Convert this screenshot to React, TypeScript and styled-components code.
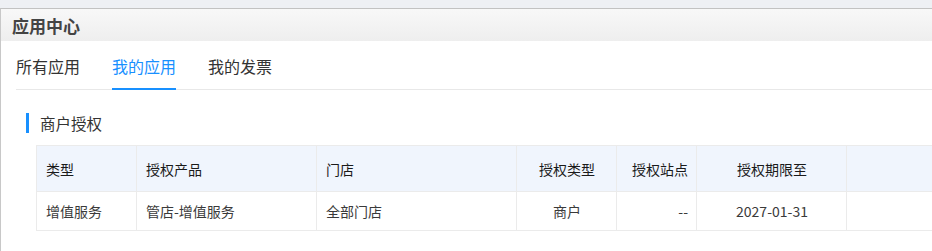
import styled, { createGlobalStyle } from "styled-components";

const GlobalStyle = createGlobalStyle`
  html, body {
    margin: 0;
    padding: 0;
    background: #eef0f4;
    font-family: "Noto Sans CJK SC", "Noto Sans", sans-serif;
  }
`;

const Page = styled.div`
  padding-top: 8px;
  height: 243px;
  overflow: hidden;
`;

const Panel = styled.div`
  height: 100%;
  overflow: hidden;
  background: #fff;
  border-top: 1px solid #c2c2c2;
  border-left: 1px solid #c8c8c8;
`;

const PanelHeader = styled.div`
  height: 32px;
  display: flex;
  align-items: center;
  padding-left: 11px;
  background: linear-gradient(#f8f8f8, #eeeeee);
  font-size: 17px;
  font-weight: 700;
  color: #444;
`;

const Tabs = styled.div`
  display: flex;
  gap: 32px;
  margin-left: 15px;
  height: 48px;
  border-bottom: 1px solid #e8e8e8;
`;

const Tab = styled.div<{ $active?: boolean }>`
  display: flex;
  align-items: center;
  padding-top: 2px;
  font-size: 16px;
  color: ${(p) => (p.$active ? "#1890ff" : "#333")};
  border-bottom: 2px solid ${(p) => (p.$active ? "#1890ff" : "transparent")};
  margin-bottom: -1px;
  box-sizing: border-box;
`;

const Section = styled.div`
  padding: 23px 0 0 25px;
`;

const SectionTitle = styled.div`
  display: flex;
  align-items: center;
  height: 20px;
  border-left: 3px solid #1890ff;
  padding-left: 11px;
  font-size: 15.5px;
  color: #333;
`;

const Table = styled.table`
  margin: 12px 0 0 10px;
  border-collapse: collapse;
  width: 1000px;
  table-layout: fixed;
  font-size: 14px;
`;

const Th = styled.th<{ $align?: string; $w?: number }>`
  width: ${(p) => (p.$w ? `${p.$w}px` : "auto")};
  height: 46px;
  padding: 0 8px 0 9px;
  background: #f0f5fd;
  border: 1px solid #ebebeb;
  text-align: ${(p) => p.$align || "left"};
  font-weight: 400;
  color: #1a1a1a;
  box-sizing: border-box;
`;

const Td = styled.td<{ $align?: string }>`
  height: 39px;
  padding: 0 8px 0 9px;
  border: 1px solid #ebebeb;
  text-align: ${(p) => p.$align || "left"};
  color: #3a3a3a;
  box-sizing: border-box;
`;

const columns = [
  { title: "类型", w: 100, align: "left" },
  { title: "授权产品", w: 180, align: "left" },
  { title: "门店", w: 200, align: "left" },
  { title: "授权类型", w: 100, align: "center" },
  { title: "授权站点", w: 80, align: "right" },
  { title: "授权期限至", w: 150, align: "center" },
  { title: "", w: 0, align: "left" },
];

const rows = [["增值服务", "管店-增值服务", "全部门店", "商户", "--", "2027-01-31", ""]];

export default function App() {
  return (
    <>
      <GlobalStyle />
      <Page>
        <Panel>
          <PanelHeader>应用中心</PanelHeader>
          <Tabs>
            <Tab>所有应用</Tab>
            <Tab $active>我的应用</Tab>
            <Tab>我的发票</Tab>
          </Tabs>
          <Section>
            <SectionTitle>商户授权</SectionTitle>
            <Table>
              <thead>
                <tr>
                  {columns.map((c, i) => (
                    <Th key={i} $w={c.w} $align={c.align}>
                      {c.title}
                    </Th>
                  ))}
                </tr>
              </thead>
              <tbody>
                {rows.map((r, i) => (
                  <tr key={i}>
                    {r.map((v, j) => (
                      <Td key={j} $align={columns[j].align}>
                        {v}
                      </Td>
                    ))}
                  </tr>
                ))}
              </tbody>
            </Table>
          </Section>
        </Panel>
      </Page>
    </>
  );
}
